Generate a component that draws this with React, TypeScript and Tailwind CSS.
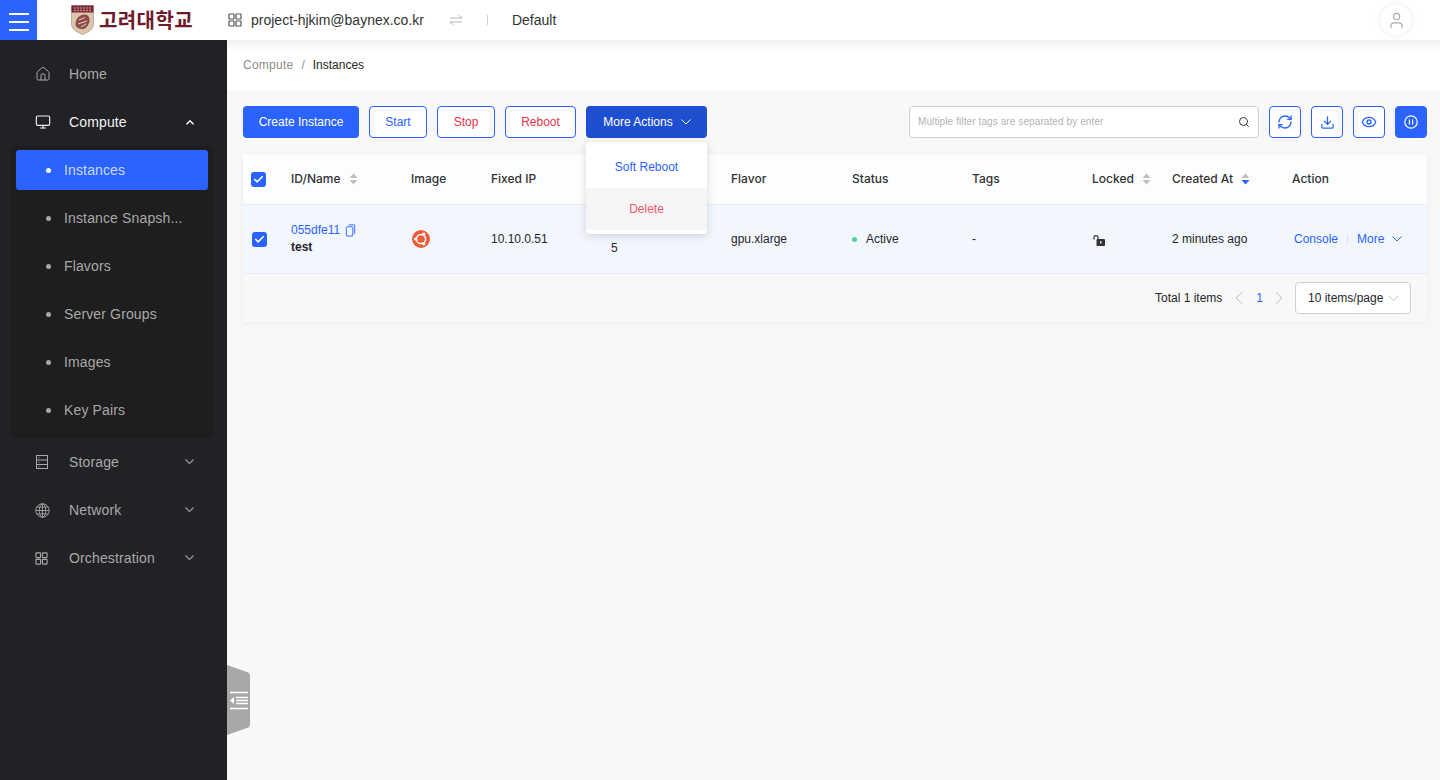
import React from "react";
import { House, Monitor, User, Search, RefreshCw, Download, Eye, Check } from "lucide-react";

const Grid4 = ({ className = "", s = 14 }: { className?: string; s?: number }) => (
  <svg viewBox="0 0 14 14" width={s} height={s} fill="none" stroke="currentColor" strokeWidth="1.2" className={className}>
    <rect x="1" y="1" width="5" height="5" rx="0.6" /><rect x="8" y="1" width="5" height="5" rx="0.6" />
    <rect x="1" y="8" width="5" height="5" rx="0.6" /><rect x="8" y="8" width="5" height="5" rx="0.6" />
  </svg>
);

const V = ({ w = 10, color = "currentColor", sw = 1.1, className = "" }: { w?: number; color?: string; sw?: number; className?: string }) => (
  <svg viewBox="0 0 10 6" width={w} height={(w * 6) / 10} fill="none" stroke={color} strokeWidth={sw} className={className}>
    <path d="M0.5 0.5L5 5L9.5 0.5" />
  </svg>
);

const Chev = ({ right = false, className = "" }: { right?: boolean; className?: string }) => (
  <svg viewBox="0 0 8 12" width="8" height="12" fill="none" stroke="#bdbdbd" strokeWidth="1" className={className}>
    <path d={right ? "M1 0.5L7 6L1 11.5" : "M7 0.5L1 6L7 11.5"} />
  </svg>
);

const Sort = ({ active = false }: { active?: boolean }) => (
  <svg viewBox="0 0 9 12" width="9" height="12" className="ml-2">
    <path d="M4.5 0.5L8.5 5H0.5Z" fill="#bfbfbf" />
    <path d="M4.5 11.5L0.5 7H8.5Z" fill={active ? "#2b63ff" : "#bfbfbf"} />
  </svg>
);

const Checkbox = () => (
  <span className="flex h-[15px] w-[15px] items-center justify-center rounded-[3px] bg-[#2b63ff]">
    <Check size={11} color="#fff" strokeWidth={3.6} />
  </span>
);

const SideItem = ({ icon, label, open, bright = false }: { icon: React.ReactNode; label: string; open?: boolean; bright?: boolean }) => (
  <div className={`flex h-12 items-center pl-[35px] pr-[32px] text-sm tracking-[0.01em] ${bright ? "text-[#f2f2f2]" : "text-[#a8a8a8]"}`}>
    <span className="flex w-[34px] items-center">{icon}</span>
    <span className="flex-1">{label}</span>
    {open === true && <V w={8} sw={2} className="mx-[1px] rotate-180" />}
    {open === false && <V w={9} sw={1.6} color="#8a8a8a" className="mr-[1px]" />}
  </div>
);

const SubItem = ({ label, active = false }: { label: string; active?: boolean }) => (
  <div className={`mx-[5px] mb-2 flex h-10 items-center rounded-[3px] pl-[30px] text-sm tracking-[0.01em] ${active ? "bg-[#2b63ff] text-[#c9d8ff]" : "text-[#a8a8a8]"}`}>
    <span className={`mr-[13px] h-[5px] w-[5px] rounded-full ${active ? "bg-white" : "bg-[#a8a8a8]"}`} />
    {label}
  </div>
);

const Outline = ({ label, red = false, w }: { label: string; red?: boolean; w: string }) => (
  <button className={`h-8 ${w} rounded-[4px] border border-[#2b63ff] bg-white text-xs ${red ? "text-[#e8304f]" : "text-[#2b63ff]"}`}>{label}</button>
);

const IconBtn = ({ children, solid = false }: { children: React.ReactNode; solid?: boolean }) => (
  <button className={`flex h-8 w-8 items-center justify-center rounded-[4px] border border-[#2b63ff] ${solid ? "bg-[#2b63ff] text-white" : "bg-white text-[#2b63ff]"}`}>{children}</button>
);

const cols = "grid grid-cols-[48px_120px_80px_120px_120px_121px_120px_120px_80px_120px_135px] items-center";

export default function App() {
  return (
    <div className="flex h-[780px] w-[1440px] flex-col overflow-hidden bg-[#f8f8f8] font-['Liberation_Sans',sans-serif] text-xs text-[#262626]">
      <header className="relative z-20 flex h-10 shrink-0 items-center bg-white">
        <div className="flex h-10 w-[37px] flex-col items-center justify-center gap-[6px] bg-[#2b63ff] pt-[3px]">
          <span className="h-[2px] w-5 bg-white" /><span className="h-[2px] w-5 bg-white" /><span className="h-[2px] w-5 bg-white" />
        </div>
        <div className="ml-[34px] flex w-[157px] items-center">
          <svg viewBox="0 0 23 30" width="23" height="30">
            <path d="M0.5 0.5H22.5V19C22.5 25 16 27.5 11.5 29.5C7 27.5 0.5 25 0.5 19Z" fill="#d9c6ab" stroke="#a98b77" strokeWidth="0.6" />
            <path d="M0.5 0.5H22.5V7.5H0.5Z" fill="#7a2a38" />
            <path d="M3 3H20M3 5.4H20" stroke="#d9c6ab" strokeWidth="0.8" strokeDasharray="2 1" />
            <path d="M4.5 19C5 13 9 9.5 13.5 9.5C18 9.5 19.5 14 18 18C16.5 22 13 25 10.5 24C7 23.5 4.5 22 4.5 19Z" fill="#8f4a48" />
            <path d="M8 15L14 12.5M7 19L16 16M10 22L15 19" stroke="#e4d6bf" strokeWidth="1" />
          </svg>
          <span className="ml-[5px] font-['Noto_Sans_CJK_KR',sans-serif] text-[20px] font-bold leading-none tracking-[0.4px] text-[#6e1a2b]">고려대학교</span>
        </div>
        <Grid4 className="text-[#555]" />
        <span className="ml-[9px] text-sm text-[#333]">project-hjkim@baynex.co.kr</span>
        <svg viewBox="0 0 14 12" width="14" height="12" fill="none" stroke="#b5b5b5" strokeWidth="1" className="ml-[25px]">
          <path d="M1 4H13L9.5 1M13 8H1L4.5 11" />
        </svg>
        <span className="ml-[24px] h-[10px] w-px bg-[#d0d0d0]" />
        <span className="ml-[24px] text-sm text-[#333]">Default</span>
        <span className="ml-auto mr-[29px] flex h-[30px] w-[30px] items-center justify-center rounded-full bg-white shadow-[0_0_8px_rgba(0,0,0,0.08)]">
          <User size={19} color="#aaa" strokeWidth={1.4} />
        </span>
      </header>

      <div className="relative flex min-h-0 flex-1">
        <aside className="relative z-30 w-[227px] shrink-0 bg-[#222226] pt-[10px]">
          <SideItem icon={<House size={16} strokeWidth={1.5} />} label="Home" />
          <SideItem icon={<Monitor size={16} strokeWidth={1.7} />} label="Compute" open bright />
          <div className="ml-[11px] mr-[14px] flex flex-col rounded-[4px] bg-[#1e1e1e] pt-1">
            <SubItem label="Instances" active />
            <SubItem label="Instance Snapsh..." />
            <SubItem label="Flavors" />
            <SubItem label="Server Groups" />
            <SubItem label="Images" />
            <SubItem label="Key Pairs" />
          </div>
          <SideItem
            open={false}
            icon={
              <svg viewBox="0 0 14 16" width="14" height="16" fill="none" stroke="currentColor" strokeWidth="1">
                <rect x="1.5" y="1.5" width="11" height="13" /><path d="M1.5 6H12.5M1.5 10.5H12.5M3.5 3.7H4.5M3.5 8.2H4.5M3.5 12.7H4.5" />
              </svg>
            }
            label="Storage"
          />
          <SideItem
            open={false}
            icon={
              <svg viewBox="0 0 14 14" width="15" height="15" fill="none" stroke="currentColor" strokeWidth="0.8">
                <circle cx="7" cy="7" r="6.3" /><ellipse cx="7" cy="7" rx="3" ry="6.3" />
                <path d="M7 0.7V13.3M0.7 7H13.3M1.6 3.8H12.4M1.6 10.2H12.4" />
              </svg>
            }
            label="Network"
          />
          <SideItem open={false} icon={<Grid4 s={13} />} label="Orchestration" />
        </aside>

        <div className="absolute left-[227px] top-[625px] z-10">
          <svg viewBox="0 0 23 70" width="23" height="70">
            <path d="M0 0L20 7Q23 8 23 11V59Q23 62 20 63L0 70Z" fill="#a8a8a8" />
            <path d="M3 27.5H21M3 43.5H21M9 32.5H21M9 35.5H21M9 38.5H21" stroke="#fff" strokeWidth="1.3" />
            <path d="M7 32V39L3 35.5Z" fill="#fff" />
          </svg>
        </div>

        <main className="min-w-0 flex-1">
          <div className="flex h-[50px] items-center bg-white pl-4 shadow-[inset_0_14px_12px_-10px_rgba(0,0,0,0.07)]">
            <span className="text-[#8c8c8c] tracking-[0.02em]">Compute</span>
            <span className="ml-[8px] mr-[8px] text-[#8c8c8c]">/</span>
            <span className="text-[#262626]">Instances</span>
          </div>

          <div className="pl-[16px] pr-[13px] pt-4">
            <div className="flex h-8 items-center">
              <button className="h-8 w-[116px] rounded-[4px] bg-[#2b63ff] text-xs text-white">Create Instance</button>
              <div className="ml-[10px] flex gap-[10px]">
                <Outline label="Start" w="w-[58px]" />
                <Outline label="Stop" red w="w-[58px]" />
                <Outline label="Reboot" red w="w-[71px]" />
              </div>
              <div className="relative ml-[10px]">
                <button className="flex h-8 w-[121px] items-center justify-center gap-[8px] rounded-[4px] bg-[#1f4fd1] pl-[1px] text-xs text-white">
                  More Actions <V w={10} sw={1} />
                </button>
                <div className="absolute left-0 top-9 z-20 h-[92px] w-[121px] overflow-hidden rounded-[4px] bg-white text-center shadow-[0_2px_8px_rgba(0,0,0,0.15)]">
                  <div className="flex h-[46px] items-center justify-center pt-1 text-[#2b63ff]">Soft Reboot</div>
                  <div className="flex h-[42px] items-center justify-center bg-[#f5f5f5] text-[#ec5a6e]">Delete</div>
                </div>
              </div>
              <div className="ml-auto flex h-8 w-[350px] items-center justify-between rounded-[4px] border border-[#d0d0d0] bg-white pl-2 pr-2">
                <span className="text-[10px] tracking-[0.01em] text-[#b3b3b3]">Multiple filter tags are separated by enter</span>
                <Search size={12} color="#333" strokeWidth={2} />
              </div>
              <div className="ml-[10px] flex gap-[10px]">
                <IconBtn><RefreshCw size={16} strokeWidth={2} /></IconBtn>
                <IconBtn><Download size={15} strokeWidth={2} /></IconBtn>
                <IconBtn><Eye size={16} strokeWidth={2} /></IconBtn>
                <IconBtn solid>
                  <svg viewBox="0 0 14 14" width="14" height="14" fill="none" stroke="currentColor" strokeWidth="1.2">
                    <circle cx="7" cy="7" r="6.2" /><path d="M5.4 4.5V9.5M8.6 4.5V9.5" />
                  </svg>
                </IconBtn>
              </div>
            </div>

            <div className="mt-4 rounded-[2px] bg-white shadow-[0_1px_6px_rgba(0,0,0,0.06)]">
              <div className={`${cols} h-[51px] border-b border-[#e8edf5] bg-[#fcfdff] font-['Inter',sans-serif] font-medium text-[#333]`}>
                <span className="pl-2"><Checkbox /></span>
                <span className="flex items-center">ID/Name <Sort /></span>
                <span>Image</span>
                <span>Fixed IP</span>
                <span />
                <span>Flavor</span>
                <span>Status</span>
                <span>Tags</span>
                <span className="flex items-center">Locked <Sort /></span>
                <span className="flex items-center">Created At <Sort active /></span>
                <span>Action</span>
              </div>
              <div className={`${cols} h-[69px] border-b border-[#e8edf5] bg-[#f2f6ff]`}>
                <span className="pl-[9px]"><Checkbox /></span>
                <span className="pb-[2px]">
                  <span className="flex items-center text-[#2b63ff]">
                    055dfe11
                    <svg viewBox="0 0 11 14" width="11" height="13" fill="none" stroke="#2b63ff" strokeWidth="1" className="ml-[5px]">
                      <rect x="1" y="3" width="7" height="10" rx="0.8" /><path d="M3.5 1H10V10.5" />
                    </svg>
                  </span>
                  <span className="mt-[2px] block font-bold leading-[14px]">test</span>
                </span>
                <span>
                  <svg viewBox="0 0 18 18" width="18" height="18" className="ml-px block">
                    <circle cx="9" cy="9" r="9" fill="#ef5b38" />
                    <circle cx="9" cy="9" r="4.6" fill="none" stroke="#fff" strokeWidth="1.5" />
                    <circle cx="3.6" cy="9" r="1.6" fill="#fff" /><circle cx="11.8" cy="4.2" r="1.6" fill="#fff" /><circle cx="11.8" cy="13.8" r="1.6" fill="#fff" />
                  </svg>
                </span>
                <span>10.10.0.51</span>
                <span className="leading-[18px]">175.125.100.2<br />5</span>
                <span>gpu.xlarge</span>
                <span className="flex items-center"><span className="mr-[9px] h-[5px] w-[5px] rounded-full bg-[#4cd48a]" />Active</span>
                <span>-</span>
                <span>
                  <svg viewBox="0 0 13 13" width="13" height="13" className="ml-px mt-[2px] block">
                    <path d="M1 5.5V3.2C1 1.2 5 1.2 5 3.2V5" fill="none" stroke="#333" strokeWidth="1.2" />
                    <rect x="3.5" y="5" width="8.5" height="7" rx="1" fill="#333" /><rect x="7.2" y="7" width="1.2" height="2.6" fill="#fff" />
                  </svg>
                </span>
                <span>2 minutes ago</span>
                <span className="flex items-center pl-[2px] text-[#2b63ff]">
                  Console<span className="mx-[9px] h-[10px] w-px bg-[#dbe1ec]" />More
                  <V w={10} sw={1} className="ml-[8px]" />
                </span>
              </div>
              <div className="flex h-12 items-center justify-end bg-[#f8f8f8] pr-4">
                <span>Total 1 items</span>
                <Chev className="ml-[13px]" />
                <span className="ml-[13px] text-[#2b63ff]">1</span>
                <Chev right className="ml-[12px]" />
                <span className="ml-[12px] flex h-8 w-[116px] items-center justify-between rounded-[4px] border border-[#d0d0d0] bg-white pl-3 pr-[11px]">
                  10 items/page <V w={11} sw={0.9} color="#bdbdbd" />
                </span>
              </div>
            </div>
          </div>
        </main>
      </div>
    </div>
  );
}
